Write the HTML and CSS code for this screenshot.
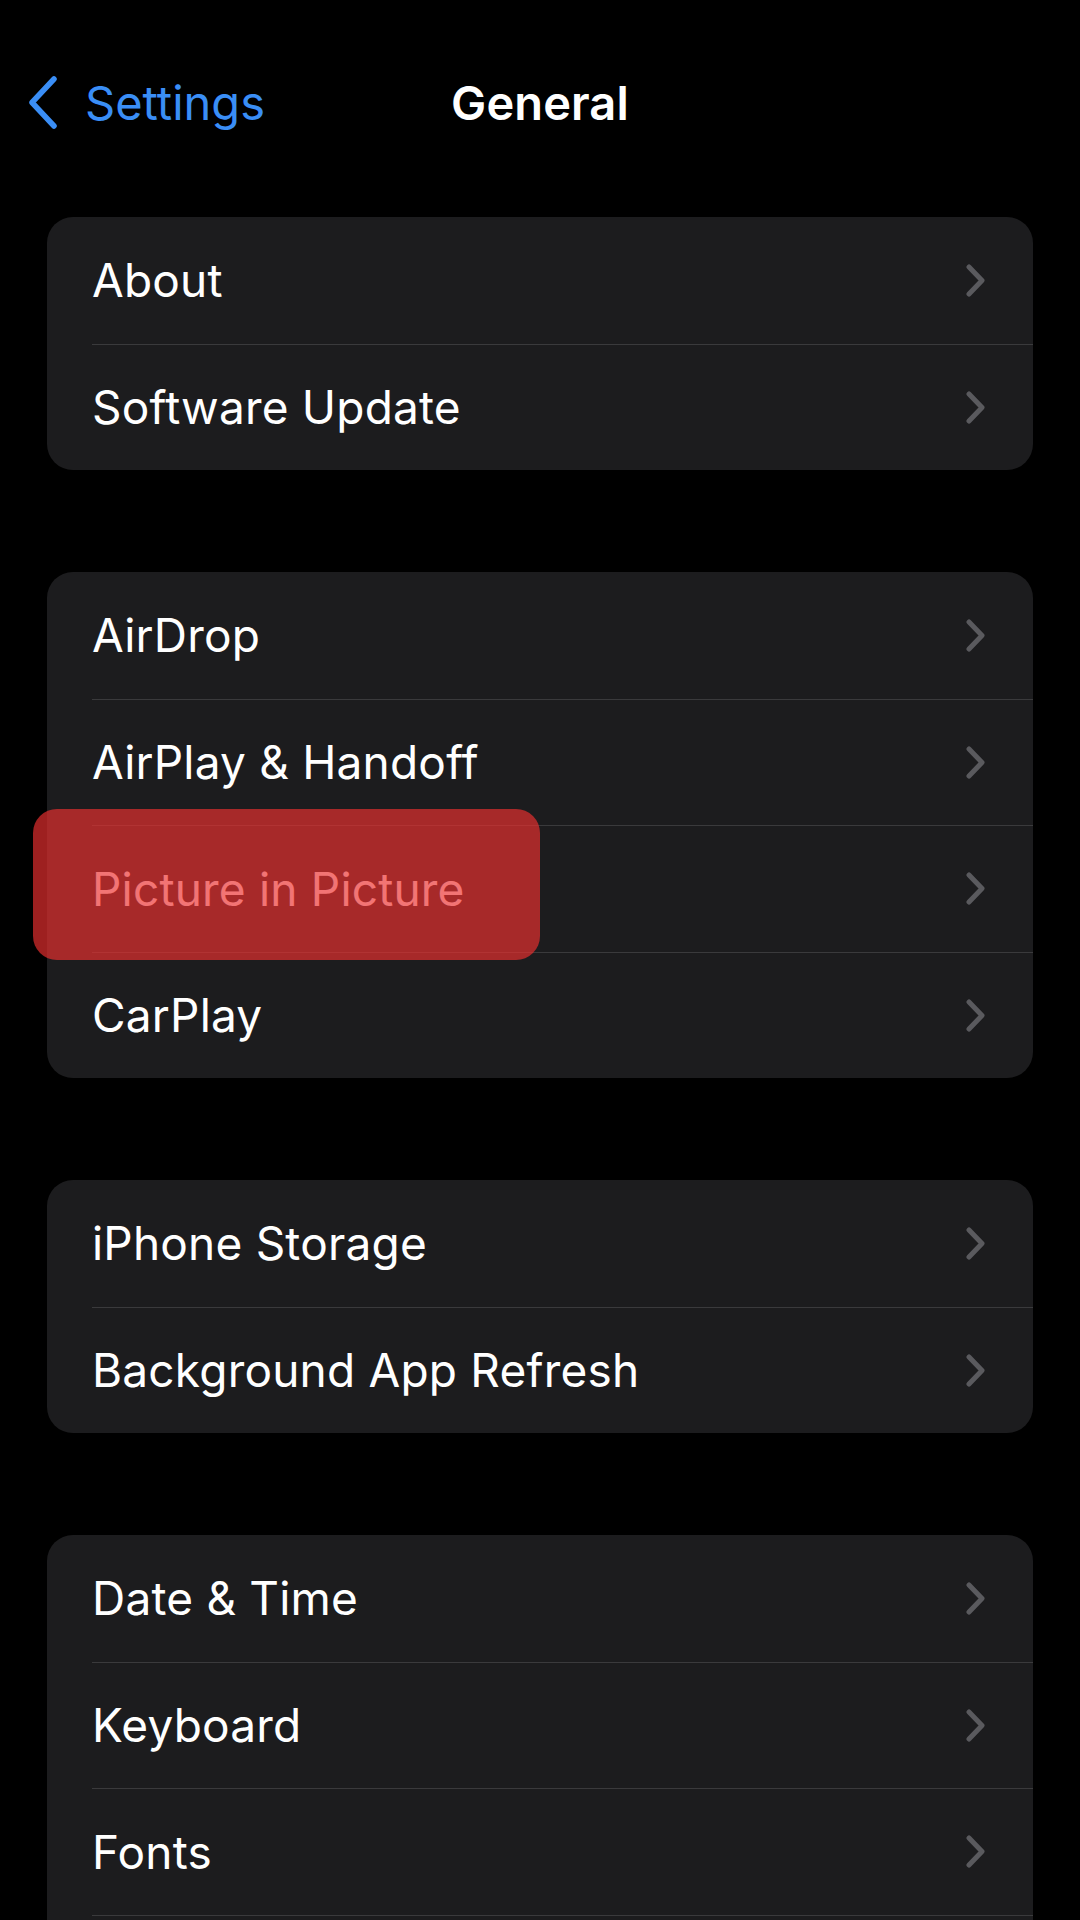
FILE: index.html
```html
<!DOCTYPE html>
<html lang="en">
<head>
  <meta charset="UTF-8">
  <meta name="viewport" content="width=device-width, initial-scale=1.0">
  <title>General</title>

  <link rel="stylesheet" href="styles.css">

</head>
<body>

  <div id="nav">
    <div class="back">
      <svg class="back-icon" width="31" height="53" viewBox="0 0 31 53">
        <path d="M26 3 L4 26.5 L26 50" />
      </svg>
      <span>Settings</span>
    </div>
    <div class="title">General</div>
    <div></div>
  </div>

  <div id="list">
    <ul class="group">
      <li><div class="row"><span>About</span><svg class="chevron" viewBox="0 0 19 33"><path d="M3 3 L16 16.5 L3 30" /></svg></div></li>
      <li><div class="row"><span>Software Update</span><svg class="chevron" viewBox="0 0 19 33"><path d="M3 3 L16 16.5 L3 30" /></svg></div></li>
    </ul>

    <ul class="group">
      <li><div class="row"><span>AirDrop</span><svg class="chevron" viewBox="0 0 19 33"><path d="M3 3 L16 16.5 L3 30" /></svg></div></li>
      <li><div class="row"><span>AirPlay &amp; Handoff</span><svg class="chevron" viewBox="0 0 19 33"><path d="M3 3 L16 16.5 L3 30" /></svg></div></li>
      <li class="marked">
        <div class="row"><span>Picture in Picture</span><svg class="chevron" viewBox="0 0 19 33"><path d="M3 3 L16 16.5 L3 30" /></svg></div>
        <div class="mark"></div>
      </li>
      <li><div class="row"><span>CarPlay</span><svg class="chevron" viewBox="0 0 19 33"><path d="M3 3 L16 16.5 L3 30" /></svg></div></li>
    </ul>

    <ul class="group">
      <li><div class="row"><span>iPhone Storage</span><svg class="chevron" viewBox="0 0 19 33"><path d="M3 3 L16 16.5 L3 30" /></svg></div></li>
      <li><div class="row"><span>Background App Refresh</span><svg class="chevron" viewBox="0 0 19 33"><path d="M3 3 L16 16.5 L3 30" /></svg></div></li>
    </ul>

    <ul class="group">
      <li><div class="row"><span>Date &amp; Time</span><svg class="chevron" viewBox="0 0 19 33"><path d="M3 3 L16 16.5 L3 30" /></svg></div></li>
      <li><div class="row"><span>Keyboard</span><svg class="chevron" viewBox="0 0 19 33"><path d="M3 3 L16 16.5 L3 30" /></svg></div></li>
      <li><div class="row"><span>Fonts</span><svg class="chevron" viewBox="0 0 19 33"><path d="M3 3 L16 16.5 L3 30" /></svg></div></li>
      <!-- next row starts just past the bottom edge -->
      <li><div class="row"></div></li>
    </ul>
  </div>

</body>
</html>
```

FILE: styles.css
```css
* {
  margin: 0;
  padding: 0;
  box-sizing: border-box;
}

body {
  background: #000;
  color: #fff;
  font-family: Inter, "Noto Sans", sans-serif;
  overflow: hidden;
}

#nav {
  display: grid;
  grid-template-columns: 1fr auto 1fr;
  align-items: center;
  height: 88px;
  margin-top: 58px;
  padding-left: 28px;
}

#nav .back {
  display: flex;
  align-items: center;
  gap: 26px;
  color: #3a8ef6;
  font-size: 47px;
  letter-spacing: 0;
}

.back-icon path {
  fill: none;
  stroke: #3a8ef6;
  stroke-width: 5.5;
  stroke-linecap: round;
  stroke-linejoin: round;
}

#nav .title {
  font-size: 47px;
  font-weight: 600;
  letter-spacing: 0.1px;
  margin-left: -28px;
}

#list {
  display: flex;
  flex-direction: column;
  gap: 102px;
  margin-top: 71px;
  padding: 0 47px;
}

.group {
  list-style: none;
  background: #1c1c1e;
  border-radius: 26px;
}

.group li {
  padding-left: 45px;
}

.group .row {
  display: flex;
  align-items: center;
  justify-content: space-between;
  height: 126.5px;
  padding-right: 48px;
  font-size: 46px;
  letter-spacing: 0.2px;
}

.group li + li .row {
  border-top: 1px solid #3a3a3c;
}

.chevron {
  width: 19px;
  height: 33px;
}

.chevron path {
  fill: none;
  stroke: #5a5a5e;
  stroke-width: 5;
  stroke-linecap: round;
  stroke-linejoin: round;
}

.marked {
  position: relative;
}

.marked .mark {
  position: absolute;
  left: -14px;
  top: -16px;
  width: 507px;
  height: 151px;
  border-radius: 24px;
  background: rgba(236, 48, 48, 0.67);
}
```
